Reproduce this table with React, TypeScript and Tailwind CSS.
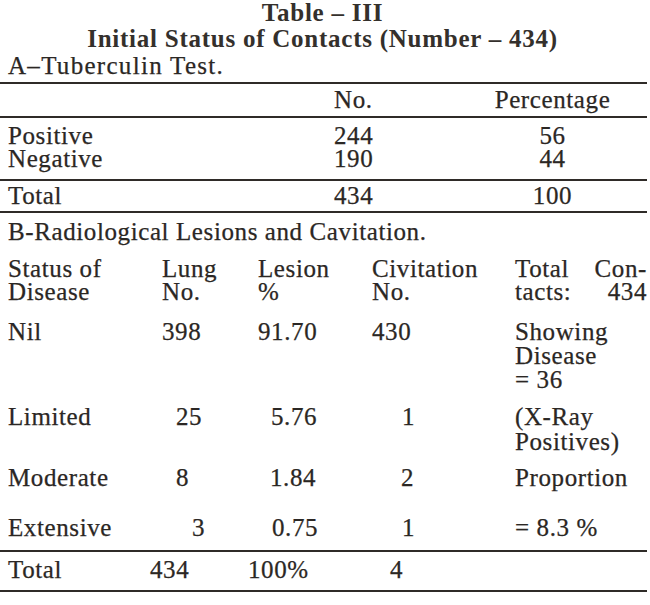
const serif = "font-[family-name:'Liberation_Serif','Times_New_Roman',serif]";

function Rule() {
  return <div className="h-[2px] w-[647px] bg-[#2f2b28]" />;
}

export default function App() {
  return (
    <div
      className={`${serif} h-[605px] w-[650px] overflow-hidden bg-white text-[25px] tracking-[0.6px] text-[#2b2724] [-webkit-text-stroke:0.25px_#2b2724]`}
    >
      {/* heading */}
      <div className="w-[645px] text-center font-bold tracking-[0.75px] text-[#34302c] [-webkit-text-stroke:0px]">
        <div className="h-[25px] leading-[25px]">Table – III</div>
        <div className="h-[28px] leading-[28px]">Initial Status of Contacts (Number – 434)</div>
      </div>
      <div className="h-[26px] pl-[8px] leading-[26px] tracking-[1.3px]">A–Tuberculin Test.</div>

      {/* part A */}
      <div className="mt-[3px]">
        <Rule />
        <div className="grid h-[32px] grid-cols-[326px_158px_121px] items-center pl-[8px] leading-[24px]">
          <span />
          <span>No.</span>
          <span className="text-center">Percentage</span>
        </div>
        <Rule />
        <div className="grid grid-cols-[326px_158px_121px] pt-[6px] pb-[9px] pl-[8px] leading-[23px]">
          <span>Positive</span>
          <span>244</span>
          <span className="text-center">56</span>
          <span>Negative</span>
          <span>190</span>
          <span className="text-center">44</span>
        </div>
        <Rule />
        <div className="grid grid-cols-[326px_158px_121px] pt-[3px] pb-[3px] pl-[8px] leading-[24px]">
          <span>Total</span>
          <span>434</span>
          <span className="text-center">100</span>
        </div>
        <Rule />
      </div>

      {/* part B */}
      <div className="pt-[6px] pl-[8px] leading-[25px]">B-Radiological Lesions and Cavitation.</div>

      <div className="mt-[13px] grid grid-cols-[154px_96px_114px_143px_132px] pl-[8px] leading-[23px]">
        <span>
          Status of
          <br />
          Disease
        </span>
        <span>
          Lung
          <br />
          No.
        </span>
        <span>
          Lesion
          <br />%
        </span>
        <span>
          Civitation
          <br />
          No.
        </span>
        <span>
          <span className="flex justify-between">
            <span>Total</span>
            <span>Con-</span>
          </span>
          <span className="flex justify-between">
            <span>tacts:</span>
            <span>434</span>
          </span>
        </span>
      </div>

      <div className="mt-[17px] grid grid-cols-[154px_96px_114px_143px_132px] pl-[8px] leading-[24px]">
        <span>Nil</span>
        <span>398</span>
        <span>91.70</span>
        <span>430</span>
        <span>
          Showing
          <br />
          Disease
          <br />= 36
        </span>
      </div>

      <div className="mt-[12px] grid grid-cols-[154px_96px_114px_143px_132px] pl-[8px] leading-[25px]">
        <span>Limited</span>
        <span className="pl-[14px]">25</span>
        <span className="pl-[13px]">5.76</span>
        <span className="pl-[30px]">1</span>
        <span>
          (X-Ray
          <br />
          Positives)
        </span>
      </div>

      <div className="mt-[12px] grid grid-cols-[154px_96px_114px_143px_132px] pl-[8px] leading-[24px]">
        <span>Moderate</span>
        <span className="pl-[14px]">8</span>
        <span className="pl-[12px]">1.84</span>
        <span className="pl-[29px]">2</span>
        <span>Proportion</span>
      </div>

      <div className="mt-[26px] grid grid-cols-[154px_96px_114px_143px_132px] pl-[8px] leading-[24px]">
        <span>Extensive</span>
        <span className="pl-[30px]">3</span>
        <span className="pl-[14px]">0.75</span>
        <span className="pl-[30px]">1</span>
        <span>= 8.3 %</span>
      </div>

      <div className="mt-[10px]">
        <Rule />
      </div>
      <div className="grid grid-cols-[142px_98px_142px_1fr] pt-[6px] pb-[8px] pl-[8px] leading-[24px]">
        <span>Total</span>
        <span>434</span>
        <span>100%</span>
        <span>4</span>
      </div>
      <Rule />
    </div>
  );
}
